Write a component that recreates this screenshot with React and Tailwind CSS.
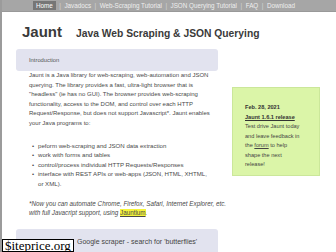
const navItems = ["Home", "Javadocs", "Web-Scraping Tutorial", "JSON Querying Tutorial", "FAQ", "Download"];

const bullets = [
  "peform web-scraping and JSON data extraction",
  "work with forms and tables",
  "control/process individual HTTP Requests/Responses",
  "interface with REST APIs or web-apps (JSON, HTML, XHTML,",
];

export default function App() {
  return (
    <div className="relative w-[336px] h-[252px] overflow-hidden bg-white border-l-2 border-[#9b9b9b] font-['Liberation_Sans',Arial,sans-serif]">
      <div className="h-[12px] bg-[#a6a6a6] border-b border-[#999] flex items-center pl-[31px] text-[6.3px] text-[#eeeeee]">
        {navItems.map((item, i) => (
          <div key={item} className="flex items-center">
            {i > 0 && <span className="px-[3.5px] text-[#d6d6d6]">|</span>}
            <span className={i === 0 ? "bg-[#767676] text-white px-[3px] h-[9px] flex items-center" : ""}>{item}</span>
          </div>
        ))}
      </div>

      <div className="flex items-baseline pl-[20px] pt-[12px] h-[37px] text-[#3a3a3a]">
        <span className="text-[15px] font-bold leading-none">Jaunt</span>
        <span className="ml-[14px] text-[10.3px] font-bold leading-none">Java Web Scraping &amp; JSON Querying</span>
      </div>

      <div className="flex pl-[14px]">
        <div className="w-[202px] shrink-0">
          <div className="h-[22px] bg-[#e2e3ef] rounded-[3px] flex items-center pl-[13px] text-[5.8px] text-[#555]">Introduction</div>
          <div className="pl-[13px] text-[6px] leading-[9.6px] text-[#4a4a4a] whitespace-nowrap">
            <div>Jaunt is a Java library for web-scraping, web-automation and JSON</div>
            <div>querying. The library provides a fast, ultra-light browser that is</div>
            <div>"headless" (ie has no GUI). The browser provides web-scraping</div>
            <div>functionality, access to the DOM, and control over each HTTP</div>
            <div>Request/Response, but does not support Javascript*. Jaunt enables</div>
            <div>your Java programs to:</div>
            <ul className="mt-[12px] pl-[3px] text-[6.1px]">
              {bullets.map((b) => (
                <li key={b} className="flex">
                  <span className="w-[6px]">•</span>
                  <span>{b}</span>
                </li>
              ))}
              <li className="pl-[6px]">or XML).</li>
            </ul>
            <div className="mt-[10px] italic text-[6.3px]">*Now you can automate Chrome, Firefox, Safari, Internet Explorer, etc.</div>
            <div className="italic text-[6.3px]">
              with full Javacript support, using <span className="bg-[#f5f53c] underline not-italic">Jauntium</span>.
            </div>
          </div>
          <div className="mt-[11px] h-[30px] bg-[#e2e3ef] rounded-[3px] pl-[61px] pt-[8px] text-[7px] text-[#444]">
            Google scraper - search for 'butterflies'
          </div>
        </div>

        <div className="ml-[14px] mt-[38px] w-[88px] h-[89px] bg-[#dbf5a8] border border-[#cbe79a] pl-[12px] pt-[15px] text-[5.6px] leading-[9.5px] text-[#444]">
          <div className="font-bold text-[#333]">Feb. 28, 2021</div>
          <div className="font-bold underline text-[#333]">Jaunt 1.6.1 release</div>
          <div>Test drive Jaunt today</div>
          <div>and leave feedback in</div>
          <div>
            the <span className="underline">forum</span> to help
          </div>
          <div>shape the next</div>
          <div>release!</div>
        </div>
      </div>

      <div className="absolute left-0 bottom-0 h-[13px] px-[2px] bg-white border border-black text-black text-[13px] leading-[12px] font-['Liberation_Serif',serif] flex items-center">
        $iteprice.org
      </div>
    </div>
  );
}
